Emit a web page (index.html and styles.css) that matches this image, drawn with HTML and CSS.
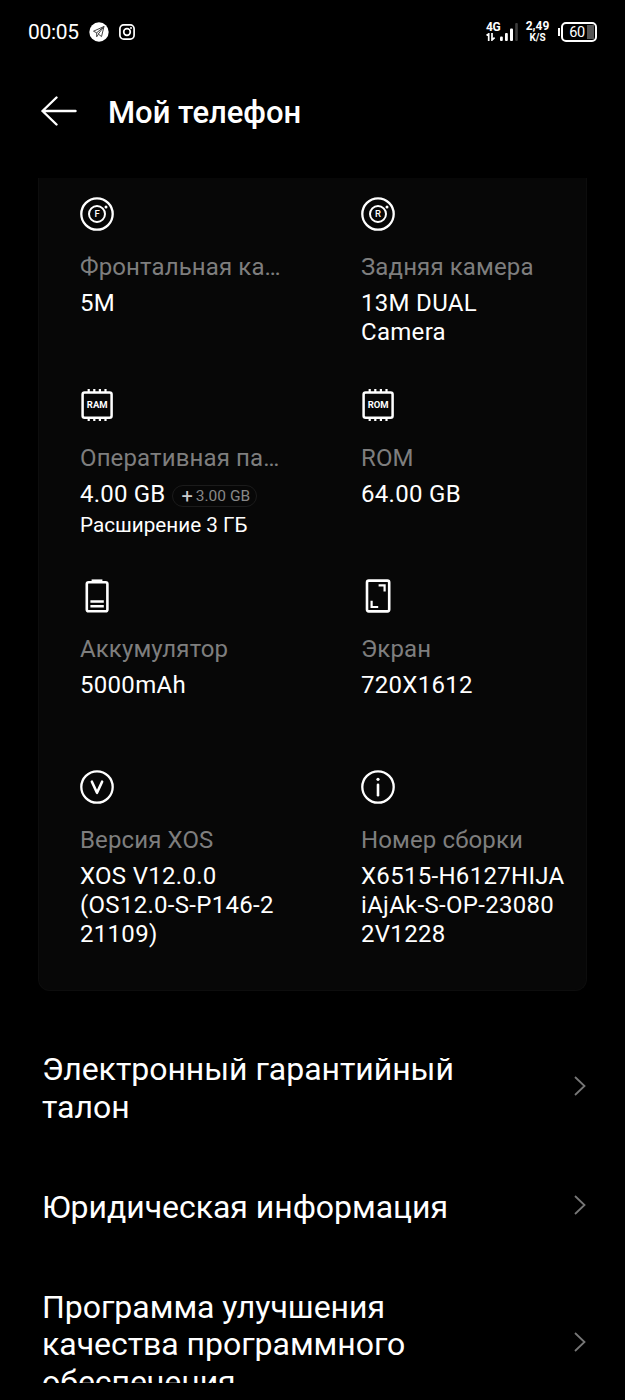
FILE: index.html
```html
<!DOCTYPE html>
<html lang="ru">
<head>
  <meta charset="UTF-8" />
  <meta name="viewport" content="width=device-width, initial-scale=1.0"/>
  <title>Мой телефон</title>
  <link rel="stylesheet" href="styles.css">
</head>
<body>
  <div class="status-bar">
    <span class="clock">00:05</span>
    <svg class="status-telegram" width="20" height="20" viewBox="0 0 20 20">
      <circle cx="10" cy="10" r="9.7" fill="#fff"/>
      <path d="M15 4.5 4.5 9.2l3.2 1.6L15 4.5 9.3 12l3.2 2.6L15 4.5M7.7 10.8v4l1.8-2.6" fill="none" stroke="#444" stroke-width="1" stroke-linejoin="round"/>
    </svg>
    <svg class="status-instagram" width="16" height="16" viewBox="0 0 16 16" fill="none" stroke="#fff">
      <rect x="0.9" y="0.9" width="14.2" height="14.2" rx="3.8" stroke-width="1.7"/>
      <circle cx="8" cy="8" r="3.3" stroke-width="1.7"/>
      <circle cx="12" cy="4" r="1" fill="#fff" stroke="none"/>
    </svg>
    <div class="status-right">
      <div class="network">
        <span>4G</span>
        <svg width="10" height="8" viewBox="0 0 10 8" fill="none" stroke="#fff" stroke-width="1.7">
          <path d="M.5 2.4 2.7.9V8M6 0v7l2.6-2.3"/>
        </svg>
      </div>
      <svg class="signal" width="18" height="18" viewBox="0 0 18 18" fill="#fff">
        <rect x="0" y="13.5" width="2.8" height="4.5" rx="1"/>
        <rect x="5" y="10" width="2.8" height="8" rx="1"/>
        <rect x="10" y="5.5" width="3" height="12.5" rx="1"/>
        <rect x="15.2" y="0" width="2.6" height="18" rx="1" fill="#3c3c3c"/>
      </svg>
      <div class="speed">
        <span class="speed-value">2,49</span>
        <span class="speed-unit">K/S</span>
      </div>
      <div class="battery"><span>60</span></div>
    </div>
  </div>

  <div class="header">
    <svg width="36" height="30" viewBox="0 0 36 30" fill="none" stroke="#fff" stroke-width="2.4" stroke-linecap="round" stroke-linejoin="round">
      <path d="M34.5 15H1.5M15.5 1.5 1.5 15l14 13.5"/>
    </svg>
    <h1>Мой телефон</h1>
  </div>

  <div class="content">
    <div class="card">
      <div class="cell">
        <svg class="icon" viewBox="0 0 34 34" fill="none" stroke="#fff">
          <circle cx="17" cy="17" r="15.7" stroke-width="2.3"/>
          <circle cx="17" cy="17" r="8" stroke-width="2"/>
          <circle cx="26" cy="10" r="1.5" fill="#fff" stroke="none"/>
          <text class="lens-text" x="17" y="20.4">F</text>
        </svg>
        <div class="label">Фронтальная ка…</div>
        <div class="value">5M</div>
      </div>
      <div class="cell">
        <svg class="icon" viewBox="0 0 34 34" fill="none" stroke="#fff">
          <circle cx="17" cy="17" r="15.7" stroke-width="2.3"/>
          <circle cx="17" cy="17" r="8" stroke-width="2"/>
          <circle cx="26" cy="10" r="1.5" fill="#fff" stroke="none"/>
          <text class="lens-text" x="17" y="20.4">R</text>
        </svg>
        <div class="label">Задняя камера</div>
        <div class="value">13M DUAL<br>Camera</div>
      </div>
      <div class="cell">
        <svg class="icon" viewBox="0 0 34 34" fill="none" stroke="#fff">
          <rect x="2.6" y="4.6" width="29" height="25.2" rx="2" stroke-width="2.5"/>
          <path d="M8.7 1v3M14.3 1v3M19.9 1v3M25.5 1v3M8.7 30v3M14.3 30v3M19.9 30v3M25.5 30v3" stroke-width="2.2"/>
          <text class="chip-text" x="17.2" y="20.2">RAM</text>
        </svg>
        <div class="label">Оперативная па…</div>
        <div class="value memory">4.00 GB <span class="badge"><b>+</b>3.00 GB</span></div>
        <div class="note">Расширение 3 ГБ</div>
      </div>
      <div class="cell">
        <svg class="icon" viewBox="0 0 34 34" fill="none" stroke="#fff">
          <rect x="2.6" y="4.6" width="29" height="25.2" rx="2" stroke-width="2.5"/>
          <path d="M8.7 1v3M14.3 1v3M19.9 1v3M25.5 1v3M8.7 30v3M14.3 30v3M19.9 30v3M25.5 30v3" stroke-width="2.2"/>
          <text class="chip-text" x="17.2" y="20.2">ROM</text>
        </svg>
        <div class="label">ROM</div>
        <div class="value">64.00 GB</div>
      </div>
      <div class="cell">
        <svg class="icon" viewBox="0 0 34 34" fill="none" stroke="#fff">
          <rect x="6.8" y="3.2" width="20.6" height="29" rx="1.8" stroke-width="2.6"/>
          <path d="M11.6 1.9h10.8" stroke-width="3"/>
          <path d="M10.4 22.6h13.4M10.4 27.2h13.4" stroke-width="2.5"/>
        </svg>
        <div class="label">Аккумулятор</div>
        <div class="value">5000mAh</div>
      </div>
      <div class="cell">
        <svg class="icon" viewBox="0 0 34 34" fill="none" stroke="#fff">
          <rect x="6" y="1.6" width="22.2" height="30.8" rx="1.8" stroke-width="2.6"/>
          <path d="M17.6 6.4h6v6.2M10.6 21.8V28h6.6" stroke-width="2.2"/>
        </svg>
        <div class="label">Экран</div>
        <div class="value">720X1612</div>
      </div>
      <div class="cell">
        <svg class="icon" viewBox="0 0 34 34" fill="none" stroke="#fff">
          <circle cx="17" cy="17" r="15.7" stroke-width="2.3"/>
          <path d="M11.9 11.7 17 22.8l5.1-11.1" stroke-width="2.6" stroke-linecap="round" stroke-linejoin="round"/>
        </svg>
        <div class="label">Версия XOS</div>
        <div class="value">XOS V12.0.0<br>(OS12.0-S-P146-2<br>21109)</div>
      </div>
      <div class="cell">
        <svg class="icon" viewBox="0 0 34 34" fill="none" stroke="#fff">
          <circle cx="17" cy="17" r="15.7" stroke-width="2.3"/>
          <path d="M17 14.8v10.4" stroke-width="2.6" stroke-linecap="round"/>
          <circle cx="17" cy="9.3" r="1.6" fill="#fff" stroke="none"/>
        </svg>
        <div class="label">Номер сборки</div>
        <div class="value">X6515-H6127HIJA<br>iAjAk-S-OP-23080<br>2V1228</div>
      </div>
    </div>

    <div class="menu">
      <div class="menu-item">
        <span>Электронный гарантийный<br>талон</span>
        <svg class="chevron" viewBox="0 0 12 20"><path d="M1 1l9.5 9L1 19"/></svg>
      </div>
      <div class="menu-item">
        <span>Юридическая информация</span>
        <svg class="chevron" viewBox="0 0 12 20"><path d="M1 1l9.5 9L1 19"/></svg>
      </div>
      <div class="menu-item">
        <span>Программа улучшения<br>качества программного<br>обеспечения</span>
        <svg class="chevron" viewBox="0 0 12 20"><path d="M1 1l9.5 9L1 19"/></svg>
      </div>
    </div>
  </div>
</body>
</html>
```
FILE: styles.css
```css
* {
  box-sizing: border-box;
}

body {
  font-family: Roboto, Arial, sans-serif;
  background-color: #000;
  color: #fff;
  margin: 0;
  height: 1400px;
  overflow: hidden;
}

.status-bar {
  display: flex;
  align-items: center;
  height: 63px;
  padding: 0 28px;
}
.clock {
  font-size: 21px;
  letter-spacing: -0.3px;
  width: 61px;
}
.status-instagram {
  margin-left: 10px;
}
.status-right {
  display: flex;
  align-items: center;
  margin-left: auto;
}
.network {
  font-size: 12px;
  font-weight: 700;
  letter-spacing: -0.3px;
  line-height: 11px;
  width: 14px;
}
.network span,
.network svg {
  display: block;
}
.speed {
  display: flex;
  flex-direction: column;
  align-items: center;
  font-weight: 700;
  width: 25px;
  margin: 0 8px 0 7px;
}
.speed-value {
  font-size: 12px;
  line-height: 11px;
}
.speed-unit {
  font-size: 10px;
  line-height: 11px;
}
.battery {
  position: relative;
  width: 36px;
  height: 20px;
  margin-left: 3px;
  padding-right: 4px;
  border: 2px solid #fff;
  border-radius: 5px;
  background: linear-gradient(#555, #555) no-repeat 24px 1px / 7px 14px;
  font-size: 14.5px;
  line-height: 17px;
  letter-spacing: -0.5px;
  text-align: center;
}
.battery::before {
  content: "";
  position: absolute;
  left: -5px;
  top: 4px;
  width: 2px;
  height: 8px;
  background-color: #fff;
}

.header {
  display: flex;
  align-items: center;
  height: 115px;
  padding: 0 41px 19px;
}
.header h1 {
  margin: 2px 0 0 31px;
  font-size: 31px;
  font-weight: 500;
}

.content {
  height: 1205px;
  overflow: hidden;
}

.card {
  display: grid;
  grid-template-columns: 281px 1fr;
  grid-auto-rows: 191px;
  width: 549px;
  height: 813px;
  margin-left: 38px;
  padding: 19px 0 0 41px;
  background-color: #070707;
  border: 1px solid #0d0d0d;
  border-top: none;
  border-radius: 0 0 12px 12px;
}
.icon {
  display: block;
  width: 34px;
  height: 34px;
}
.lens-text,
.chip-text {
  fill: #fff;
  stroke: none;
  font-weight: 500;
  text-anchor: middle;
}
.lens-text {
  font-size: 9.5px;
}
.chip-text {
  font-size: 9.5px;
  font-weight: 700;
}
.label {
  margin-top: 22px;
  font-size: 24px;
  line-height: 28px;
  color: #7e7e7e;
  letter-spacing: 0.12px;
}
.value {
  margin-top: 8px;
  font-size: 24px;
  line-height: 29px;
  letter-spacing: 0.3px;
}
.memory {
  display: flex;
  align-items: center;
  letter-spacing: 0.2px;
}
.badge {
  display: flex;
  align-items: center;
  height: 22px;
  margin: 3px 0 0 7px;
  padding: 0 6px 0 8px;
  border: 1px solid #1b1b1b;
  border-radius: 11px;
  font-size: 15.5px;
  letter-spacing: 0;
  color: #888;
}
.badge b {
  margin-right: 3px;
  font-size: 20px;
  font-weight: 400;
  color: #ccc;
}
.note {
  margin-top: 3px;
  font-size: 20.7px;
  line-height: 26px;
}

.menu {
  padding: 60px 39px 0 42px;
}
.menu-item {
  display: flex;
  align-items: center;
  justify-content: space-between;
  margin-bottom: 62.5px;
  font-size: 32px;
  line-height: 37.5px;
  letter-spacing: -0.03px;
}
.chevron {
  width: 12px;
  height: 20px;
  margin-bottom: 5px;
  fill: none;
  stroke: #777;
  stroke-width: 1.8;
}
```
